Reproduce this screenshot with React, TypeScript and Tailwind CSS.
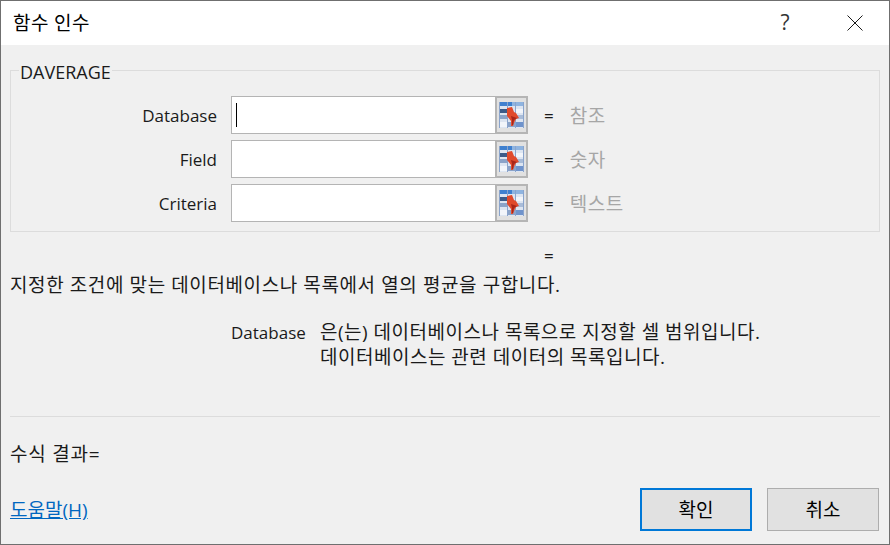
const FONT = "font-['Open_Sans','Noto_Sans_CJK_KR',sans-serif]";

const ARGS = [
  { label: "Database", hint: "참조", focused: true },
  { label: "Field", hint: "숫자", focused: false },
  { label: "Criteria", hint: "텍스트", focused: false },
];

// range picker icon: little sheet with a red arrow over it
function RefIcon() {
  return (
    <svg width="25" height="26" viewBox="0 0 25 26" shapeRendering="crispEdges">
      <rect x="0" y="0" width="25" height="26" fill="#dde5f1" />
      <rect x="1" y="0" width="12" height="4" fill="#3f80cf" />
      <rect x="13" y="0" width="11" height="4" fill="#8fb4e0" />
      <rect x="0" y="7" width="8" height="4" fill="#3c5a88" />
      <rect x="16" y="7" width="9" height="4" fill="#f2f5fa" />
      <rect x="0" y="13" width="8" height="4" fill="#8ba3c8" />
      <rect x="17" y="13" width="8" height="4" fill="#a9bcd8" />
      <rect x="1" y="20" width="7" height="5" fill="#f2f5fa" />
      <rect x="9" y="20" width="7" height="5" fill="#8ba3c8" />
      <rect x="17" y="20" width="8" height="5" fill="#6f93cc" />
      <rect x="0" y="0" width="1" height="26" fill="#8aa4cc" />
      <rect x="8" y="0" width="1" height="26" fill="#8aa4cc" />
      <rect x="16" y="0" width="1" height="26" fill="#8aa4cc" />
      <rect x="24" y="0" width="1" height="26" fill="#8aa4cc" />
      <path d="M8 6 L13 5 L15 10 L17 11 L20 16 L17 17 L15 21 L14 24 L12 24 L12 19 L8 14 Z" fill="#e04a2c" shapeRendering="auto" />
      <path d="M12 14 L18 16 L15 18 L14 23 L13 23 L13 18 Z" fill="#a8261a" shapeRendering="auto" />
    </svg>
  );
}

function ArgRow({ label, hint, focused }: { label: string; hint: string; focused: boolean }) {
  return (
    <div className="flex items-center h-[38px]">
      <div className="w-[220px] pr-[14px] pt-[2px] text-right text-[17px] text-[#1a1a1a]">{label}</div>
      <div className="flex items-center w-[265px] h-[38px] bg-white border border-[#b4b4b4] pl-[4px]">
        {focused && <div className="w-px h-[24px] bg-black" />}
      </div>
      <div className="flex items-center justify-center w-[33px] h-[38px] bg-[#e1e1e1] border-[2px] border-[#b5b5b5] -ml-px">
        <RefIcon />
      </div>
      <div className="ml-[16px] pt-[2px] text-[17px] text-[#1a1a1a]">=</div>
      <div className="ml-[16px] pt-[2px] text-[19px] tracking-[0.5px] text-[#a6a6a6]">{hint}</div>
    </div>
  );
}

export default function App() {
  return (
    <div className={`${FONT} flex flex-col w-[890px] h-[545px] bg-[#f0f0f0] border border-[#6f6f6f] text-black overflow-hidden`}>
      {/* title bar */}
      <div className="flex items-center h-[44px] shrink-0 bg-white pl-[12px]">
        <div className="text-[19px] tracking-[0.4px]">함수 인수</div>
        <div className="ml-auto w-[20px] text-center text-[21px] text-[#333]">?</div>
        <div className="ml-[52px] mr-[26px]">
          <svg width="16" height="16" viewBox="0 0 16 16">
            <path d="M0.5 0.5 L15.5 15.5 M15.5 0.5 L0.5 15.5" stroke="#1a1a1a" strokeWidth="1" fill="none" />
          </svg>
        </div>
      </div>

      <div className="flex flex-col flex-1 px-[9px]">
        {/* DAVERAGE group */}
        <fieldset className="h-[172px] mt-[15px] border border-[#dcdcdc] pt-[16px]">
          <legend className="ml-[8px] px-px text-[18px] leading-[20px] text-[#1a1a1a]">
            <span className="block translate-y-[2px]">DAVERAGE</span>
          </legend>
          <div className="flex flex-col gap-[6px]">
            {ARGS.map((arg) => (
              <ArgRow key={arg.label} {...arg} />
            ))}
          </div>
        </fieldset>

        <div className="pl-[534px] mt-[12px] text-[17px] leading-[24px] text-[#1a1a1a]">=</div>
        <div className="mt-[5px] text-[19px] tracking-[0.6px] leading-[24px] text-[#1a1a1a]">
          지정한 조건에 맞는 데이터베이스나 목록에서 열의 평균을 구합니다.
        </div>

        <div className="flex mt-[23px] pl-[221px] text-[19px] tracking-[0.5px] leading-[25px] text-[#1a1a1a]">
          <div className="w-[89px] text-[17px] tracking-normal">Database</div>
          <div>
            <div>은(는) 데이터베이스나 목록으로 지정할 셀 범위입니다.</div>
            <div>데이터베이스는 관련 데이터의 목록입니다.</div>
          </div>
        </div>

        <div className="mt-[46px] border-t border-[#dcdcdc]" />

        <div className="mt-[25px] text-[19px] tracking-[0.8px] leading-[24px] text-[#1a1a1a]">수식 결과=</div>

        <div className="flex items-center justify-between mt-[22px]">
          <a href="#" className="pt-[2px] text-[19px] text-[#0067c0] underline">도움말(H)</a>
          <div className="flex gap-[15px] mr-[1px]">
            <button className="w-[112px] h-[43px] pt-[2px] bg-[#e1e1e1] border-[2px] border-[#0078d7] text-[19px]">확인</button>
            <button className="w-[112px] h-[43px] pt-[2px] bg-[#e1e1e1] border border-[#adadad] text-[19px]">취소</button>
          </div>
        </div>
      </div>
    </div>
  );
}
